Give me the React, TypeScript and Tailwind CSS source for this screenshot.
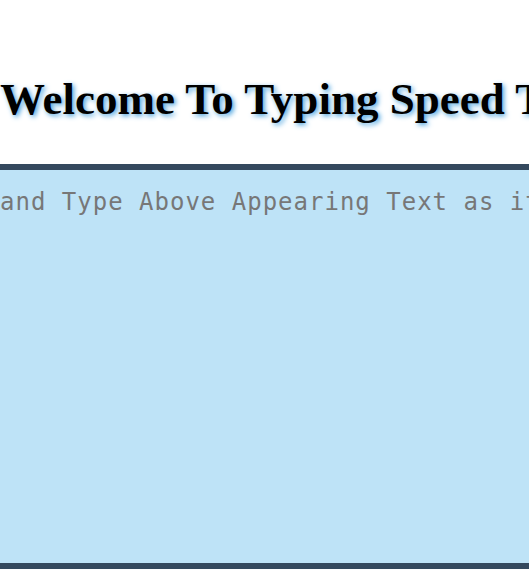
export default function App() {
  return (
    <div className="w-[529px] h-[569px] overflow-hidden bg-white">
      <h1
        className="mt-[75px] whitespace-nowrap font-bold text-[45px] leading-[48px] text-black"
        style={{ fontFamily: '"Liberation Serif", "Times New Roman", serif', textShadow: "2px 2px 5px #4aa3df" }}
      >
        Welcome To Typing Speed Test
      </h1>
      <div className="mt-[41px] h-[405px] border-t-[6px] border-b-[6px] border-[#34495e] bg-[#bee3f7] overflow-hidden">
        <div
          className="pt-[14px] whitespace-nowrap text-[24px] leading-[36px] tracking-[1px] text-[#777777]"
          style={{ fontFamily: '"DejaVu Sans Mono", monospace' }}
        >
          and Type Above Appearing Text as it appears
        </div>
      </div>
    </div>
  );
}
